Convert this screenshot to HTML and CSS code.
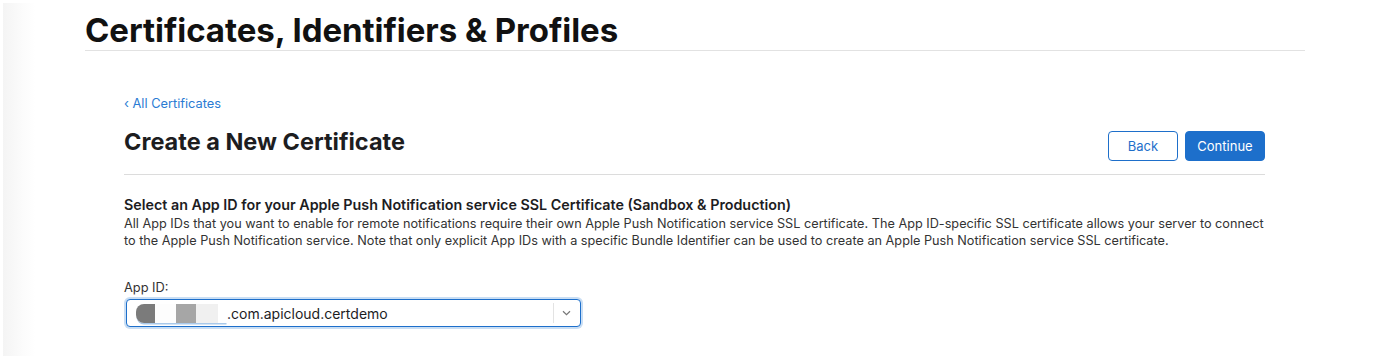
FILE: index.html
```html
<!DOCTYPE html>
<html lang="en">
<head>
<meta charset="utf-8">
<title>Create a New Certificate</title>
<link rel="stylesheet" href="styles.css">
</head>
<body>
<div class="page">
  <header class="masthead">
    <h1 class="masthead-title">Certificates, Identifiers &amp; Profiles</h1>
  </header>
  <main class="content">
    <a class="back-link" href="#">&#8249; All Certificates</a>
    <div class="title-row">
      <h2 class="page-title">Create a New Certificate</h2>
      <div class="actions">
        <button class="btn btn-secondary" type="button">Back</button>
        <button class="btn btn-primary" type="button">Continue</button>
      </div>
    </div>
    <section class="section">
      <h3 class="section-title">Select an App ID for your Apple Push Notification service SSL Certificate (Sandbox &amp; Production)</h3>
      <p class="section-desc">All App IDs that you want to enable for remote notifications require their own Apple Push Notification service SSL certificate. The App ID-specific SSL certificate allows your server to connect to the Apple Push Notification service. Note that only explicit App IDs with a specific Bundle Identifier can be used to create an Apple Push Notification service SSL certificate.</p>
    </section>
    <div class="field">
      <label class="field-label">App ID:</label>
      <div class="select">
        <span class="select-value"><span class="redacted"></span>.com.apicloud.certdemo</span>
        <span class="select-divider"></span>
        <svg class="select-chevron" width="9" height="6" viewBox="0 0 9 6"><path d="M1 1.2 4.5 4.6 8 1.2" fill="none" stroke="#777" stroke-width="1.2"/></svg>
      </div>
    </div>
  </main>
</div>
</body>
</html>
```
FILE: styles.css
```css
* { box-sizing: border-box; }
html, body { margin: 0; padding: 0; background: #fff; }
body {
  font-family: Inter, "Noto Sans", "Liberation Sans", sans-serif;
  color: #1d1d1f;
}
.page {
  margin: 3px;
  min-height: 353px;
  background: linear-gradient(to right, #f4f4f4 0, #fbfbfb 18px, #fff 32px);
  padding-top: 8px;
}
.masthead {
  margin-left: 82px;
  width: 1220px;
  border-bottom: 1px solid #e2e2e2;
}
.masthead-title {
  margin: 0;
  font-size: 33px;
  line-height: 39px;
  font-weight: 700;
  letter-spacing: -0.05px;
  color: #111;
}
.content {
  margin-left: 121px;
  width: 1141px;
  padding-top: 45px;
}
.back-link {
  display: block;
  font-size: 12.8px;
  line-height: 16px;
  color: #2a7bd3;
  text-decoration: none;
}
.title-row {
  display: flex;
  justify-content: space-between;
  align-items: flex-start;
  padding: 19px 0 13px;
  border-bottom: 1px solid #dcdcdc;
}
.page-title {
  margin: 0;
  font-size: 23.5px;
  line-height: 22px;
  font-weight: 700;
  color: #1d1d1f;
}
.actions { display: flex; gap: 7px; }
.btn {
  height: 30px;
  border-radius: 4px;
  font-family: inherit;
  font-size: 13px;
  padding: 0;
  cursor: pointer;
}
.btn-secondary {
  width: 70px;
  background: #fff;
  border: 1px solid #1e6fca;
  color: #1e6fca;
}
.btn-primary {
  width: 80px;
  background: #1d6fcb;
  border: 1px solid #1d6fcb;
  color: #fff;
}
.section { padding-top: 20px; }
.section-title {
  margin: 0;
  font-size: 14.3px;
  line-height: 20px;
  font-weight: 600;
  color: #1d1d1f;
}
.section-desc {
  margin: 0;
  font-size: 12.7px;
  line-height: 17px;
  color: #333;
}
.field { padding-top: 30px; }
.field-label {
  display: block;
  font-size: 12.8px;
  line-height: 17px;
  color: #333;
  margin-bottom: 3px;
}
.select {
  border: 1px solid #1d6fcb;
  border-radius: 4px;
  box-shadow: 0 0 0 2px #c9def4;
  display: flex;
  align-items: center;
  margin-left: 2px;
  width: 455px;
  height: 28px;
  padding: 0 9px 0 9px;
  background: #fff;
}
.select-value {
  flex: 1;
  display: flex;
  align-items: center;
  font-size: 14px;
  color: #1d1d1f;
}
.redacted {
  display: inline-block;
  width: 91px;
  height: 19px;
  border-radius: 8px 0 0 8px;
  background: linear-gradient(to right, #7b7b7b 0 19px, #fdfdfd 19px 40px, #a6a6a6 40px 60px, #f0f0f0 60px 82px, #fff 82px);
  box-shadow: 0 2px 0 -0.5px #a9c9ea;
}
.select-divider {
  width: 1px;
  height: 20px;
  background: #e3e3e3;
  margin-right: 8px;
}
.select-chevron { display: block; }
```
